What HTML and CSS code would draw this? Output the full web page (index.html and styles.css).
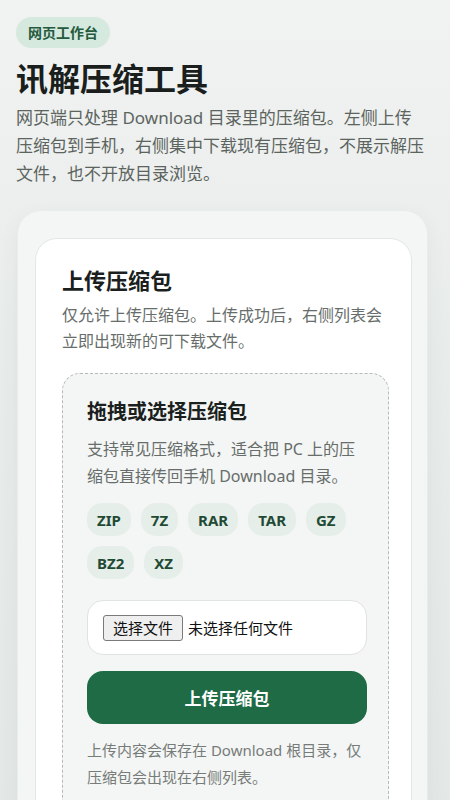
FILE: index.html
```html
<!DOCTYPE html>
<html lang="zh-CN">
<head>
<meta charset="utf-8">
<meta name="viewport" content="width=device-width, initial-scale=1">
<title>讯解压缩工具</title>
<link rel="stylesheet" href="styles.css">
</head>
<body>
  <header class="hero">
    <span class="pill">网页工作台</span>
    <h1 class="title">讯解压缩工具</h1>
    <p class="lead">网页端只处理 Download 目录里的压缩包。左侧上传压缩包到手机，右侧集中下载现有压缩包，不展示解压文件，也不开放目录浏览。</p>
  </header>
  <main class="shell">
    <section class="card">
      <h2 class="card-title">上传压缩包</h2>
      <p class="card-desc">仅允许上传压缩包。上传成功后，右侧列表会立即出现新的可下载文件。</p>
      <div class="drop">
        <h3 class="drop-title">拖拽或选择压缩包</h3>
        <p class="drop-desc">支持常见压缩格式，适合把 PC 上的压缩包直接传回手机 Download 目录。</p>
        <div class="chips">
          <span class="chip">ZIP</span>
          <span class="chip">7Z</span>
          <span class="chip">RAR</span>
          <span class="chip">TAR</span>
          <span class="chip">GZ</span>
          <span class="chip">BZ2</span>
          <span class="chip">XZ</span>
        </div>
        <label class="file-box">
          <input class="file-input" type="file">
          <span class="file-btn">选择文件</span>
          <span class="file-name">未选择任何文件</span>
        </label>
        <button class="submit" type="button">上传压缩包</button>
        <p class="note">上传内容会保存在 Download 根目录，仅压缩包会出现在右侧列表。</p>
      </div>
    </section>
  </main>
</body>
</html>
```
FILE: styles.css
```css
* { box-sizing: border-box; }

html, body {
  margin: 0;
  padding: 0;
}

body {
  font-family: "Noto Sans", "Noto Sans CJK SC", sans-serif;
  background: linear-gradient(180deg, #f1f3f2 0%, #e8ecea 40%, #e3e8e6 100%);
  min-height: 800px;
  color: #1b1f1d;
  overflow: hidden;
}

.hero {
  padding: 17px 16px 0 16px;
  max-width: 444px;
}

.pill {
  display: inline-block;
  height: 31px;
  line-height: 31px;
  padding: 0 12px;
  border-radius: 999px;
  background: #d5e9de;
  color: #245a3d;
  font-size: 14px;
  font-weight: 700;
}

.title {
  margin: 9px 0 0;
  font-size: 32px;
  line-height: 44px;
  font-weight: 700;
  color: #1a1e1c;
}

.lead {
  margin: 3px 0 0;
  font-size: 17px;
  line-height: 28px;
  color: #5c6460;
}

.shell {
  margin: 22px 22px 0 17px;
  padding: 27px 15px 16px 17px;
  background: #f4f6f5;
  border: 1px solid #e8ecea;
  border-radius: 24px;
  box-shadow: 0 6px 20px rgba(60, 80, 70, 0.06);
}

.card {
  background: #ffffff;
  border: 1px solid #e3e7e5;
  border-radius: 22px;
  padding: 26px 22px 24px 26px;
}

.card-title {
  margin: 0;
  font-size: 22px;
  line-height: 30px;
  font-weight: 700;
  color: #1b1f1d;
}

.card-desc {
  margin: 7px 0 0;
  font-size: 16px;
  line-height: 26px;
  color: #676d6a;
}

.drop {
  margin-top: 19px;
  border: 1px dashed #b5bbb8;
  border-radius: 18px;
  background: #f4f6f5;
  padding: 24px 21px 24px 24px;
}

.drop-title {
  margin: 0;
  font-size: 20px;
  line-height: 28px;
  font-weight: 700;
  color: #1b1f1d;
}

.drop-desc {
  margin: 10px 0 0;
  font-size: 16px;
  line-height: 27px;
  color: #676d6a;
}

.chips {
  display: flex;
  flex-wrap: wrap;
  gap: 10px 10px;
  margin-top: 13px;
}

.chip {
  display: inline-flex;
  align-items: center;
  justify-content: center;
  height: 33px;
  padding: 0 10px;
  border-radius: 15px;
  background: #e6eeea;
  color: #1f4a34;
  font-size: 15px;
  font-weight: 700;
}

.file-box {
  display: flex;
  align-items: center;
  gap: 5px;
  margin-top: 21px;
  height: 55px;
  padding: 0 15px;
  background: #ffffff;
  border: 1px solid #dfe3e1;
  border-radius: 16px;
  cursor: pointer;
}

.file-input {
  display: none;
}

.file-btn {
  display: inline-block;
  height: 26px;
  line-height: 24px;
  padding: 0 9px;
  background: #efefef;
  border: 1px solid #7a7a7a;
  border-radius: 3px;
  font-size: 15px;
  color: #111;
}

.file-name {
  font-size: 15px;
  color: #111;
}

.submit {
  display: block;
  width: 100%;
  margin-top: 16px;
  height: 53px;
  border: none;
  border-radius: 16px;
  background: #1e6b45;
  color: #ffffff;
  font-family: inherit;
  font-size: 17px;
  font-weight: 700;
  cursor: pointer;
}

.note {
  margin: 13px 0 0;
  font-size: 15px;
  line-height: 27px;
  color: #777c79;
}
```
